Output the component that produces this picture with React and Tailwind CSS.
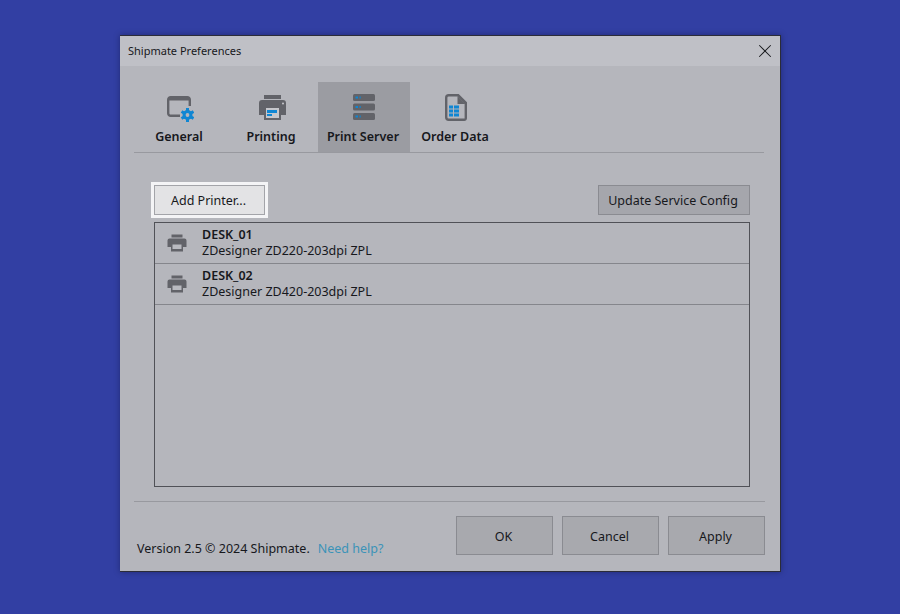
import { X } from 'lucide-react';

function GeneralIcon() {
  return (
    <svg width="28" height="28" viewBox="0 0 28 28" className="block">
      <path d="M23.800 12V5.700A2.500 2.500 0 0 0 21.300 3.200H4.700A2.500 2.500 0 0 0 2.200 5.700V19.300A2.500 2.500 0 0 0 4.700 21.800H14" fill="none" stroke="#626369" strokeWidth="2.400" />
      <path d="M3 4h20v2.500H3z" fill="#626369" />
      <g stroke="#0f86d3" strokeWidth="3">
        <path d="M21.500 14v14M15.500 17.500l12 7M27.500 17.500l-12 7" />
      </g>
      <circle cx="21.500" cy="21" r="5" fill="#0f86d3" />
      <circle cx="21.500" cy="21" r="1.900" fill="#b5b6bc" />
    </svg>
  );
}

function PrintingIcon() {
  return (
    <svg width="28" height="26" viewBox="0 0 28 26" className="block">
      <path d="M6 1h17v4H6z" fill="#626369" />
      <path d="M4 6h21a3 3 0 0 1 3 3v12h-5v5H6v-5H1V9a3 3 0 0 1 3-3z" fill="#626369" />
      <circle cx="25" cy="9.500" r="1" fill="#c8c9ce" />
      <path d="M8 14h13v10H8z" fill="#c6c7cc" />
      <path d="M9 16h10v3H9z" fill="#0f86d3" />
      <path d="M9 20h5v2H9z" fill="#0f86d3" />
    </svg>
  );
}

function ServerIcon() {
  return (
    <svg width="24" height="28" viewBox="0 0 24 28" className="block">
      {[0, 9.500, 19].map((y) => (
        <g key={y}>
          <rect x="1" y={y} width="22" height="7" rx="1.500" fill="#626369" />
          <path d={`M3.500 ${y + 2.500}h2.500v2H3.500z`} fill="#0f86d3" />
          <path d={`M7.500 ${y + 2.500}h1.200v2H7.500z`} fill="#0f86d3" />
        </g>
      ))}
    </svg>
  );
}

function OrderIcon() {
  return (
    <svg width="24" height="28" viewBox="0 0 24 28" className="block">
      <path d="M4.700 1.200h9.500l7.600 7.600v15.500a1.500 1.500 0 0 1-1.500 1.500H4.700a2.500 2.500 0 0 1-2.500-2.500V3.700a2.500 2.500 0 0 1 2.500-2.500z" fill="none" stroke="#626369" strokeWidth="2.400" />
      <path d="M13.500 2l8 8h-8z" fill="#626369" />
      <path d="M5 11.500h4v3H5zM10 11.500h5v3h-5zM5 15.500h4v3H5zM10 15.500h5v3h-5zM5 19.500h4v3H5zM10 19.500h5v3h-5z" fill="#0f86d3" />
    </svg>
  );
}

function RowPrinter() {
  return (
    <svg width="20" height="18" viewBox="0 0 20 18" className="block">
      <path d="M4.500 0.500h11v3h-11z" fill="#626369" />
      <path d="M2.500 4.500h15a2 2 0 0 1 2 2V13H16v4.500H4V13H0.500V6.500a2 2 0 0 1 2-2z" fill="#626369" />
      <path d="M5.500 10.500h9v4.500h-9z" fill="#b9bac0" />
    </svg>
  );
}

const tabs = [
  { label: 'General', icon: <GeneralIcon /> },
  { label: 'Printing', icon: <PrintingIcon /> },
  { label: 'Print Server', icon: <ServerIcon />, active: true },
  { label: 'Order Data', icon: <OrderIcon /> },
];

const printers = [
  { name: 'DESK_01', driver: 'ZDesigner ZD220-203dpi ZPL' },
  { name: 'DESK_02', driver: 'ZDesigner ZD420-203dpi ZPL' },
];

export default function App() {
  return (
    <div className="h-[614px] w-[900px] bg-[#323fa3] flex items-start pl-[120px] pt-[35px] font-['Noto_Sans',sans-serif] text-[12.5px] text-[#17181c]">
      <div className="w-[661px] h-[537px] bg-[#b5b6bc] flex flex-col border-r border-b border-t border-[#2b2c38] shadow-[0_0_6px_rgba(0,0,30,0.35)]">
        {/* Title bar */}
        <div className="h-[30px] shrink-0 bg-[#bfc0c6] flex items-center justify-between pl-2 pr-[4px]">
          <span className="text-[11px]">Shipmate Preferences</span>
          <X className="w-[22px] h-[22px] text-[#17181c]" strokeWidth={1.100} />
        </div>

        <div className="flex-1 flex flex-col pl-[14px] pr-[16px]">
          {/* Tabs */}
          <div className="mt-[16px] h-[71px] shrink-0 flex border-b border-[#98999f]">
            {tabs.map((t) => (
              <div
                key={t.label}
                className={`w-[92px] h-[70px] flex flex-col items-center ${t.active ? 'bg-[#9b9ca2]' : ''}`}
              >
                <div className="h-[47px] pt-[12px] flex justify-center">{t.icon}</div>
                <span className="font-semibold leading-[16px] pr-[2px]">{t.label}</span>
              </div>
            ))}
          </div>

          <div className="flex-1 flex flex-col pl-[20px] pr-[14px]">
            {/* Toolbar */}
            <div className="flex items-center justify-between mt-[32px]">
              <button className="w-[111px] h-[30px] pt-[2px] pr-[2px] bg-[#e3e3e5] border border-[#a3a4a9] outline-[3px] outline-[#f4f4f6]">
                Add Printer...
              </button>
              <button className="w-[152px] h-[30px] pt-[2px] pr-[2px] bg-[#a5a6ac] border border-[#8a8b91]">
                Update Service Config
              </button>
            </div>

            {/* Printer list */}
            <div className="mt-[7px] h-[265px] border border-[#505157] flex flex-col">
              {printers.map((p) => (
                <div key={p.name} className="h-[41px] shrink-0 flex items-center border-b border-[#85868c]">
                  <div className="w-[47px] flex justify-center pr-[4px]">
                    <RowPrinter />
                  </div>
                  <div className="leading-[16px]">
                    <div className="font-semibold">{p.name}</div>
                    <div>{p.driver}</div>
                  </div>
                </div>
              ))}
            </div>
          </div>

          {/* Footer */}
          <div className="mb-[16px] pt-[14px] mt-[14px] border-t border-[#98999f] flex items-end justify-between -mr-[1px]">
            <div className="pl-[3px] -mb-[2px] leading-[16px]">
              <span>Version 2.5 © 2024 Shipmate.</span>
              <span className="ml-[8px] text-[#3b93b8]">Need help?</span>
            </div>
            <div className="flex gap-[9px]">
              {['OK', 'Cancel', 'Apply'].map((b) => (
                <button key={b} className="w-[97px] h-[39px] pt-[3px] pr-[2px] bg-[#a8a9ae] border border-[#8a8b91]">
                  {b}
                </button>
              ))}
            </div>
          </div>
        </div>
      </div>
    </div>
  );
}
